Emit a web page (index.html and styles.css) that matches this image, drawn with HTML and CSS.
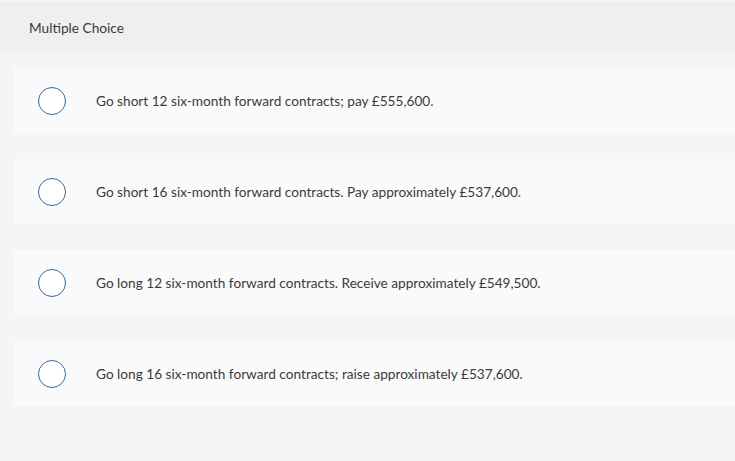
FILE: index.html
```html
<!DOCTYPE html>
<html lang="en">
<head>
<meta charset="utf-8">
<title>Multiple Choice</title>
<link rel="stylesheet" href="styles.css">
</head>
<body>
<div class="page">
  <div class="header">Multiple Choice</div>
  <div class="options">
    <label class="option"><span class="radio"></span><span class="text">Go short 12 six-month forward contracts; pay £555,600.</span></label>
    <label class="option"><span class="radio"></span><span class="text">Go short 16 six-month forward contracts. Pay approximately £537,600.</span></label>
    <label class="option"><span class="radio"></span><span class="text">Go long 12 six-month forward contracts. Receive approximately £549,500.</span></label>
    <label class="option"><span class="radio"></span><span class="text">Go long 16 six-month forward contracts; raise approximately £537,600.</span></label>
  </div>
</div>
</body>
</html>
```
FILE: styles.css
```css
html, body {
  margin: 0;
  padding: 0;
  background: #f5f5f5;
}
body {
  font-family: "Lato", "Open Sans", sans-serif;
  color: #333333;
}
.page {
  padding-top: 2px;
  width: 735px;
  height: 461px;
  box-sizing: border-box;
  overflow: hidden;
}
.header {
  height: 50px;
  background: #efefef;
  display: flex;
  align-items: center;
  padding-left: 29px;
  font-size: 13.7px;
  color: #3a3a3a;
}
.options {
  display: flex;
  flex-direction: column;
  gap: 26px;
  padding: 16px 0 0 13px;
}
.option {
  height: 65px;
  background: #fafafa;
  border-radius: 3px 0 0 3px;
  display: flex;
  align-items: center;
  padding-left: 25px;
}
.radio {
  width: 26px;
  height: 26px;
  border: 1.3px solid #2f6aa8;
  border-radius: 50%;
  background: #ffffff;
  flex: none;
}
.text {
  margin-left: 30px;
  font-size: 13.65px;
  color: #3a3a3a;
}
```
